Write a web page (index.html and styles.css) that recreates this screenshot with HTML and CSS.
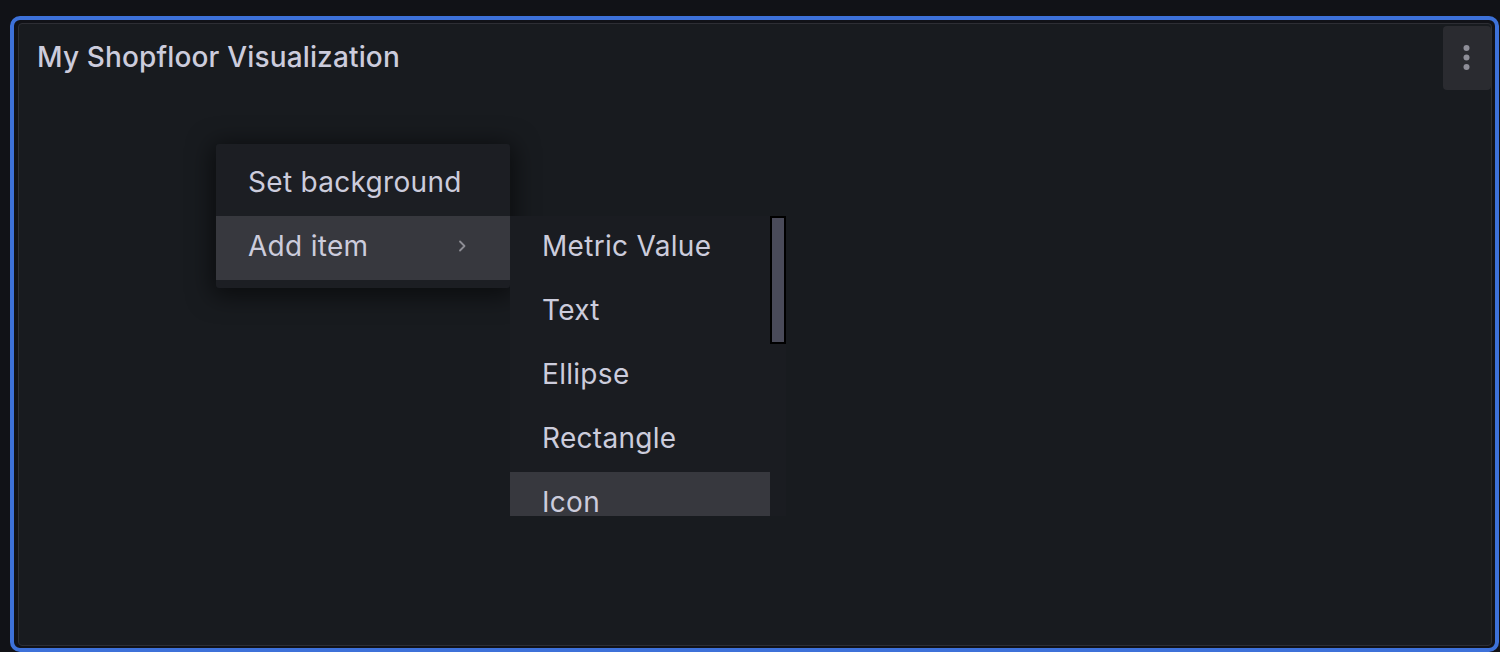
FILE: index.html
```html
<!DOCTYPE html>
<html>
<head>
<meta charset="utf-8">
<link rel="stylesheet" href="styles.css">
</head>
<body>
<div class="frame">
  <div class="panel">
    <div class="header">
      <h2 class="title">My Shopfloor Visualization</h2>
      <button class="menu-btn" aria-label="Menu">
        <svg width="8" height="28" viewBox="0 0 8 28"><circle cx="3.5" cy="4" r="3"/><circle cx="3.5" cy="13.5" r="3"/><circle cx="3.5" cy="23" r="3"/></svg>
      </button>
    </div>
    <div class="canvas">
      <div class="ctx-menu">
        <div class="item">Set background</div>
        <div class="item active has-sub">
          <span>Add item</span>
          <svg class="chev" width="10" height="14" viewBox="0 0 10 14"><path d="M3 2.5 L7.5 7 L3 11.5" fill="none" stroke="#8e8e95" stroke-width="1.8" stroke-linecap="round" stroke-linejoin="round"/></svg>
          <div class="sub-menu">
            <div class="sub-list">
              <div class="item">Metric Value</div>
              <div class="item">Text</div>
              <div class="item">Ellipse</div>
              <div class="item">Rectangle</div>
              <div class="item active">Icon</div>
            </div>
            <div class="scroll-track"><div class="scroll-thumb"></div></div>
          </div>
        </div>
      </div>
    </div>
  </div>
</div>
</body>
</html>
```

FILE: styles.css
```css
* { box-sizing: border-box; }
html, body { margin: 0; padding: 0; }
body {
  background: #111217;
  font-family: Inter, "Noto Sans", sans-serif;
  color: #ccccdc;
  height: 652px;
  overflow: hidden;
}
.frame {
  margin: 16px 1px 0 10px;
  height: 636px;
  border: 4px solid #3d71d9;
  border-radius: 10px;
  padding: 3px 3px 2px 4px;
  background: #111217;
}
.panel {
  height: 100%;
  background: #181b1f;
  border: 1px solid #2d2e34;
  border-radius: 4px;
  display: flex;
  flex-direction: column;
  position: relative;
}
.header {
  display: flex;
  align-items: center;
  justify-content: space-between;
  padding: 2px 0 0 18px;
  height: 66px;
}
.title {
  margin: 0 0 3px 0;
  font-size: 28px;
  font-weight: 500;
  color: #ccccdc;
  letter-spacing: 0.15px;
}
.menu-btn {
  width: 48px;
  height: 64px;
  border: none;
  border-radius: 4px;
  background: #2a2b30;
  display: flex;
  align-items: center;
  justify-content: center;
  padding: 0;
}
.menu-btn svg { fill: #8e8e98; }
.canvas {
  flex: 1;
  position: relative;
}
.ctx-menu {
  position: absolute;
  left: 197px;
  top: 54px;
  width: 294px;
  padding: 8px 0;
  background: #1c1e23;
  border-radius: 3px;
  box-shadow: 0 4px 24px 4px rgba(0, 0, 0, 0.55);
}
.item {
  height: 64px;
  display: flex;
  align-items: center;
  padding: 0 32px 5px;
  font-size: 28px;
  font-weight: 400;
  letter-spacing: 0.3px;
  color: #ccccdc;
  white-space: nowrap;
}
.item.active { background: #37383e; }
.has-sub {
  position: relative;
  justify-content: space-between;
  padding: 0 43px 0 32px;
}
.has-sub > span { padding-bottom: 5px; }
.chev { display: block; margin-top: -4px; }
.sub-menu {
  position: absolute;
  left: 100%;
  top: 0;
  width: 276px;
  height: 300px;
  background: #1a1c21;
  display: flex;
  overflow: hidden;
}
.sub-list { width: 260px; flex: none; }
.scroll-track { width: 16px; flex: none; }
.scroll-thumb {
  height: 128px;
  background: #4a4b5a;
  border: 2px solid #000;
}
```
